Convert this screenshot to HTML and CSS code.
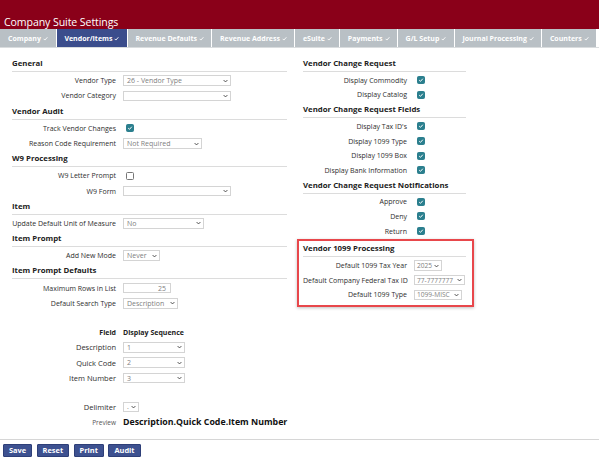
FILE: index.html
```html
<!DOCTYPE html>
<html lang="en">
<head>
<meta charset="utf-8">
<title>Company Suite Settings</title>
<link rel="stylesheet" href="styles.css">
</head>
<body>
<header class="topbar"><h1 class="title">Company Suite Settings</h1></header>
<nav class="tabs">
  <a class="tab">Company <svg class="tick" viewBox="0 0 8 8"><path d="M1 4.5 3 6.5 7 2"/></svg></a>
  <a class="tab active">Vendor/Items <svg class="tick" viewBox="0 0 8 8"><path d="M1 4.5 3 6.5 7 2"/></svg></a>
  <a class="tab">Revenue Defaults <svg class="tick" viewBox="0 0 8 8"><path d="M1 4.5 3 6.5 7 2"/></svg></a>
  <a class="tab">Revenue Address <svg class="tick" viewBox="0 0 8 8"><path d="M1 4.5 3 6.5 7 2"/></svg></a>
  <a class="tab">eSuite <svg class="tick" viewBox="0 0 8 8"><path d="M1 4.5 3 6.5 7 2"/></svg></a>
  <a class="tab">Payments <svg class="tick" viewBox="0 0 8 8"><path d="M1 4.5 3 6.5 7 2"/></svg></a>
  <a class="tab">G/L Setup <svg class="tick" viewBox="0 0 8 8"><path d="M1 4.5 3 6.5 7 2"/></svg></a>
  <a class="tab">Journal Processing <svg class="tick" viewBox="0 0 8 8"><path d="M1 4.5 3 6.5 7 2"/></svg></a>
  <a class="tab">Counters <svg class="tick" viewBox="0 0 8 8"><path d="M1 4.5 3 6.5 7 2"/></svg></a>
</nav>
<main class="content">
  <div class="col col-left">
    <section class="sec">
      <h2 class="sec-h">General</h2>
      <div class="row"><span class="lbl">Vendor Type</span><span class="sel w-231"><span class="val">26 - Vendor Type</span><svg class="chev" viewBox="0 0 8 6"><path d="M1 1.5 4 4.5 7 1.5"/></svg></span></div>
      <div class="row"><span class="lbl">Vendor Category</span><span class="sel w-231"><span class="val"></span><svg class="chev" viewBox="0 0 8 6"><path d="M1 1.5 4 4.5 7 1.5"/></svg></span></div>
    </section>
    <section class="sec">
      <h2 class="sec-h">Vendor Audit</h2>
      <div class="row"><span class="lbl">Track Vendor Changes</span><span class="cb on"><svg viewBox="0 0 8 8"><path d="M1.6 4.2 3.3 5.8 6.4 2.3"/></svg></span></div>
      <div class="row"><span class="lbl">Reason Code Requirement</span><span class="sel w-201"><span class="val">Not Required</span><svg class="chev" viewBox="0 0 8 6"><path d="M1 1.5 4 4.5 7 1.5"/></svg></span></div>
    </section>
    <section class="sec">
      <h2 class="sec-h">W9 Processing</h2>
      <div class="row"><span class="lbl">W9 Letter Prompt</span><span class="cb"></span></div>
      <div class="row"><span class="lbl">W9 Form</span><span class="sel w-231"><span class="val"></span><svg class="chev" viewBox="0 0 8 6"><path d="M1 1.5 4 4.5 7 1.5"/></svg></span></div>
    </section>
    <section class="sec">
      <h2 class="sec-h">Item</h2>
      <div class="row"><span class="lbl">Update Default Unit of Measure</span><span class="sel w-204"><span class="val">No</span><svg class="chev" viewBox="0 0 8 6"><path d="M1 1.5 4 4.5 7 1.5"/></svg></span></div>
    </section>
    <section class="sec">
      <h2 class="sec-h">Item Prompt</h2>
      <div class="row"><span class="lbl">Add New Mode</span><span class="sel w-160"><span class="val">Never</span><svg class="chev" viewBox="0 0 8 6"><path d="M1 1.5 4 4.5 7 1.5"/></svg></span></div>
    </section>
    <section class="sec">
      <h2 class="sec-h">Item Prompt Defaults</h2>
      <div class="row"><span class="lbl">Maximum Rows in List</span><span class="inp w-171">25</span></div>
      <div class="row"><span class="lbl">Default Search Type</span><span class="sel w-178"><span class="val">Description</span><svg class="chev" viewBox="0 0 8 6"><path d="M1 1.5 4 4.5 7 1.5"/></svg></span></div>
      <div class="spacer"></div>
      <div class="row row-head"><span class="lbl strong">Field</span><span class="colhead">Display Sequence</span></div>
      <div class="row"><span class="lbl lbl-lg">Description</span><span class="sel w-184"><span class="val">1</span><svg class="chev" viewBox="0 0 8 6"><path d="M1 1.5 4 4.5 7 1.5"/></svg></span></div>
      <div class="row"><span class="lbl lbl-lg">Quick Code</span><span class="sel w-184"><span class="val">2</span><svg class="chev" viewBox="0 0 8 6"><path d="M1 1.5 4 4.5 7 1.5"/></svg></span></div>
      <div class="row"><span class="lbl lbl-lg">Item Number</span><span class="sel w-184"><span class="val">3</span><svg class="chev" viewBox="0 0 8 6"><path d="M1 1.5 4 4.5 7 1.5"/></svg></span></div>
      <div class="spacer"></div>
      <div class="row"><span class="lbl lbl-lg">Delimiter</span><span class="sel w-138"><span class="val">.</span><svg class="chev" viewBox="0 0 8 6"><path d="M1 1.5 4 4.5 7 1.5"/></svg></span></div>
      <div class="row"><span class="lbl lbl-sm">Preview</span><span class="preview">Description.Quick Code.Item Number</span></div>
    </section>
  </div>
  <div class="col col-right">
    <section class="sec">
      <h2 class="sec-h">Vendor Change Request</h2>
      <div class="row rrow"><span class="lbl">Display Commodity</span><span class="cb on"><svg viewBox="0 0 8 8"><path d="M1.6 4.2 3.3 5.8 6.4 2.3"/></svg></span></div>
      <div class="row rrow"><span class="lbl">Display Catalog</span><span class="cb on"><svg viewBox="0 0 8 8"><path d="M1.6 4.2 3.3 5.8 6.4 2.3"/></svg></span></div>
    </section>
    <section class="sec">
      <h2 class="sec-h">Vendor Change Request Fields</h2>
      <div class="row rrow"><span class="lbl">Display Tax ID's</span><span class="cb on"><svg viewBox="0 0 8 8"><path d="M1.6 4.2 3.3 5.8 6.4 2.3"/></svg></span></div>
      <div class="row rrow"><span class="lbl">Display 1099 Type</span><span class="cb on"><svg viewBox="0 0 8 8"><path d="M1.6 4.2 3.3 5.8 6.4 2.3"/></svg></span></div>
      <div class="row rrow"><span class="lbl">Display 1099 Box</span><span class="cb on"><svg viewBox="0 0 8 8"><path d="M1.6 4.2 3.3 5.8 6.4 2.3"/></svg></span></div>
      <div class="row rrow"><span class="lbl">Display Bank Information</span><span class="cb on"><svg viewBox="0 0 8 8"><path d="M1.6 4.2 3.3 5.8 6.4 2.3"/></svg></span></div>
    </section>
    <section class="sec">
      <h2 class="sec-h">Vendor Change Request Notifications</h2>
      <div class="row rrow"><span class="lbl">Approve</span><span class="cb on"><svg viewBox="0 0 8 8"><path d="M1.6 4.2 3.3 5.8 6.4 2.3"/></svg></span></div>
      <div class="row rrow"><span class="lbl">Deny</span><span class="cb on"><svg viewBox="0 0 8 8"><path d="M1.6 4.2 3.3 5.8 6.4 2.3"/></svg></span></div>
      <div class="row rrow"><span class="lbl">Return</span><span class="cb on"><svg viewBox="0 0 8 8"><path d="M1.6 4.2 3.3 5.8 6.4 2.3"/></svg></span></div>
    </section>
    <section class="sec sec-flag">
      <h2 class="sec-h">Vendor 1099 Processing</h2>
      <div class="row rrow"><span class="lbl">Default 1099 Tax Year</span><span class="sel w-r28"><span class="val">2025</span><svg class="chev" viewBox="0 0 8 6"><path d="M1 1.5 4 4.5 7 1.5"/></svg></span></div>
      <div class="row rrow"><span class="lbl">Default Company Federal Tax ID</span><span class="sel w-r51"><span class="val">77-7777777</span><svg class="chev" viewBox="0 0 8 6"><path d="M1 1.5 4 4.5 7 1.5"/></svg></span></div>
      <div class="row rrow"><span class="lbl">Default 1099 Type</span><span class="sel w-r48"><span class="val">1099-MISC</span><svg class="chev" viewBox="0 0 8 6"><path d="M1 1.5 4 4.5 7 1.5"/></svg></span></div>
    </section>
  </div>
</main>
<footer class="actions">
  <button class="btn">Save</button>
  <button class="btn">Reset</button>
  <button class="btn">Print</button>
  <button class="btn">Audit</button>
</footer>
</body>
</html>
```
FILE: styles.css
```css
* { box-sizing: border-box; }
html, body { margin: 0; padding: 0; }
body {
  width: 599px;
  height: 459px;
  overflow: hidden;
  background: #fff;
  font-family: "Open Sans", "Noto Sans", sans-serif;
  color: #333;
}
.topbar {
  height: 29px;
  background: #8a0019;
  display: flex;
  align-items: flex-end;
  padding: 0 0 0 4px;
}
.title {
  margin: 0;
  font-size: 10.6px;
  font-weight: 400;
  color: #fff;
  line-height: 14px;
  letter-spacing: -0.1px;
}
.tabs {
  display: flex;
  height: 19px;
  border-bottom: 1px solid #d9dcde;
}
.tab {
  display: flex;
  align-items: center;
  justify-content: center;
  background: #b9c0c5;
  color: #fff;
  font-size: 7px;
  font-weight: 700;
  padding: 0 7.5px;
  border-right: 1.5px solid #fff;
  white-space: nowrap;
  gap: 2px;
}
.tab:first-child { padding-left: 8px; padding-right: 8px; }
.tab.active { background: #3b4d8c; }
.tick { width: 5px; height: 5px; fill: none; stroke: #fff; stroke-width: 1.4; }

.content {
  display: flex;
  gap: 16px;
  padding: 8px 0 0 12px;
}
.col-left { width: 275px; }
.col-right { width: 163px; }

.sec-h {
  margin: 0 0 1px;
  height: 16px;
  border-bottom: 1px solid #dcdcdc;
  font-size: 7.8px;
  font-weight: 700;
  color: #222;
  line-height: 15px;
}
.row {
  display: flex;
  align-items: center;
  height: 15.3px;
  font-size: 7px;
}
.rrow { height: 14.6px; }
.lbl {
  width: 104px;
  flex: none;
  text-align: right;
  margin-right: 7px;
  color: #2e2e2e;
  white-space: nowrap;
}
.lbl-lg { font-size: 7.5px; }
.lbl-sm { font-size: 6.5px; color: #555; }
.strong { font-weight: 700; color: #222; }
.colhead { font-weight: 700; color: #222; }

.sel, .inp {
  display: flex;
  align-items: center;
  height: 10.5px;
  border: 1px solid #d4d4d4;
  background: #fff;
  color: #808080;
  font-size: 7px;
  padding: 0 2px 0 3px;
}
.sel .val { flex: 1; min-width: 0; white-space: nowrap; overflow: visible; }
.chev { width: 5px; height: 4px; fill: none; stroke: #444; stroke-width: 1.5; flex: none; }
.inp { justify-content: flex-end; padding-right: 4px; }
.w-231 { width: 108px; }
.w-201 { width: 79px; }
.w-204 { width: 81px; }
.w-160 { width: 37px; }
.w-171 { width: 48px; }
.w-178 { width: 55px; }
.w-184 { width: 62px; }
.w-138 { width: 16px; }
.w-r28 { width: 28px; }
.w-r51 { width: 51px; }
.w-r48 { width: 48px; }
.w-r28, .w-r51, .w-r48 { font-size: 6.6px; padding-left: 2px; }

.cb {
  width: 8px;
  height: 8px;
  margin-left: 3px;
  border: 1px solid #777;
  border-radius: 1.5px;
  background: #fff;
  display: flex;
}
.cb.on { background: #2b7f8e; border-color: #2b7f8e; }
.cb svg { width: 100%; height: 100%; fill: none; stroke: #fff; stroke-width: 1.3; }

.spacer { height: 13.5px; }
.preview { font-size: 8.8px; font-weight: 700; color: #111; white-space: nowrap; }

.sec-flag {
  margin: 1px 0 0 -6px;
  width: 177px;
  padding: 0 6px 3px 4px;
  border: 2px solid #e8474b;
  box-shadow: 0 1px 3px rgba(0,0,0,0.25);
}

.actions {
  margin-top: 9px;
  border-top: 1px solid #d6d6d6;
  padding: 4px 0 0 3px;
  display: flex;
  gap: 4.5px;
}
.btn {
  font-family: inherit;
  height: 13px;
  padding: 0 5px;
  border: 1px solid #2e3f78;
  background: #3d5190;
  color: #fff;
  font-size: 7.4px;
  font-weight: 700;
  line-height: 11px;
  border-radius: 1px;
}
```
